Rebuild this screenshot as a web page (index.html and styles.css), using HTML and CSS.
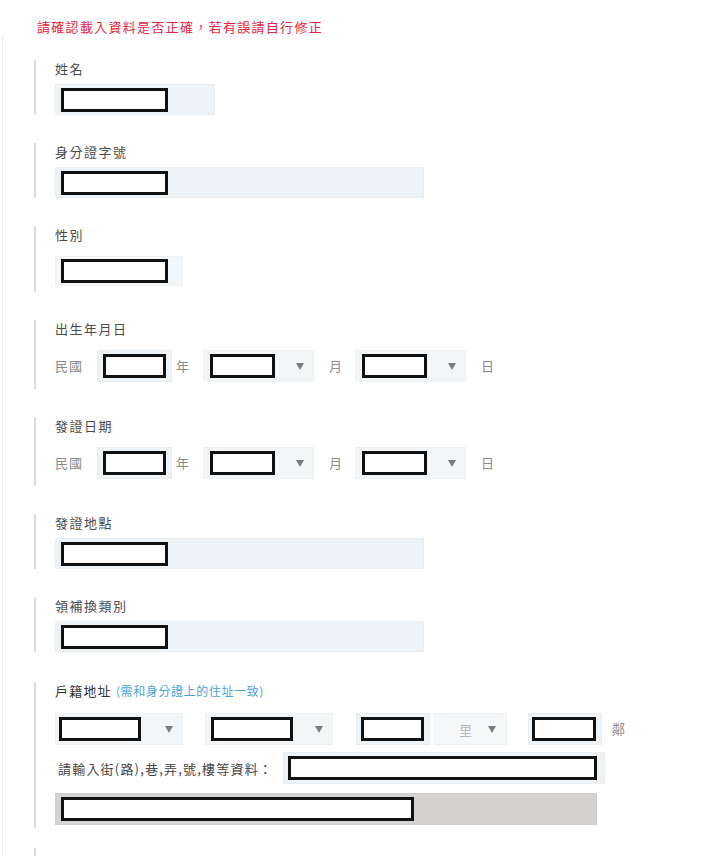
FILE: index.html
```html
<!DOCTYPE html>
<html lang="zh-Hant">
<head>
<meta charset="utf-8">
<title>資料確認</title>
<link rel="stylesheet" href="styles.css">
</head>
<body>
<div class="page">
  <p class="notice">請確認載入資料是否正確，若有誤請自行修正</p>
  <div class="panel">
    <section class="group">
      <div class="label">姓名</div>
      <div class="field w-name"><span class="redact r-107"></span></div>
    </section>

    <section class="group">
      <div class="label">身分證字號</div>
      <div class="field w-wide"><span class="redact r-107"></span></div>
    </section>

    <section class="group group-select">
      <div class="label">性別</div>
      <div class="field sel w-gender"><span class="redact r-107"></span></div>
    </section>

    <section class="group group-date">
      <div class="label">出生年月日</div>
      <div class="row">
        <span class="unit u-era">民國</span>
        <div class="field w-year"><span class="redact r-65"></span></div>
        <span class="unit u-year">年</span>
        <div class="field sel w-md"><span class="redact r-65"></span><span class="arrow"></span></div>
        <span class="unit u-month">月</span>
        <div class="field sel w-md"><span class="redact r-65"></span><span class="arrow"></span></div>
        <span class="unit u-day">日</span>
      </div>
    </section>

    <section class="group group-date">
      <div class="label">發證日期</div>
      <div class="row">
        <span class="unit u-era">民國</span>
        <div class="field w-year"><span class="redact r-65"></span></div>
        <span class="unit u-year">年</span>
        <div class="field sel w-md"><span class="redact r-65"></span><span class="arrow"></span></div>
        <span class="unit u-month">月</span>
        <div class="field sel w-md"><span class="redact r-65"></span><span class="arrow"></span></div>
        <span class="unit u-day">日</span>
      </div>
    </section>

    <section class="group">
      <div class="label">發證地點</div>
      <div class="field w-wide"><span class="redact r-107"></span></div>
    </section>

    <section class="group group-last-field">
      <div class="label">領補換類別</div>
      <div class="field w-wide"><span class="redact r-107"></span></div>
    </section>

    <section class="group group-address">
      <div class="label label-strong">戶籍地址 <span class="hint">(需和身分證上的住址一致)</span></div>
      <div class="row">
        <div class="field sel w-city"><span class="redact r-82"></span><span class="arrow"></span></div>
        <div class="field sel w-city gap-sel"><span class="redact r-82"></span><span class="arrow"></span></div>
        <div class="field w-village gap-vil"><span class="redact r-65"></span></div>
        <div class="field sel w-li"><span class="li">里</span><span class="arrow"></span></div>
        <div class="field w-village gap-nb"><span class="redact r-65"></span></div>
        <span class="unit u-nb">鄰</span>
      </div>
      <div class="row street">
        <span class="street-label">請輸入街(路),巷,弄,號,樓等資料：</span>
        <div class="field w-street"><span class="redact r-308"></span></div>
      </div>
      <div class="field result"><span class="redact r-353"></span></div>
    </section>

    <section class="group group-empty"></section>
  </div>
</div>
</body>
</html>
```

FILE: styles.css
```css
* {
  box-sizing: border-box;
}

html, body {
  margin: 0;
  padding: 0;
  background: #fff;
}

body {
  font-family: "Noto Sans CJK TC", "Noto Sans", "Liberation Sans", sans-serif;
  color: #4d4d4d;
}

.page {
  width: 719px;
}

.notice {
  margin: 0;
  padding: 18px 0 0 37px;
  height: 36px;
  font-size: 13px;
  line-height: 18px;
  letter-spacing: 1.3px;
  color: #e8253f;
}

.panel {
  margin-left: 2px;
  border-left: 1px solid #ededed;
  padding: 24px 0 0 31px;
}

.group {
  border-left: 2px solid #dedede;
  padding-left: 19px;
  margin-bottom: 28px;
}

.label {
  font-size: 13px;
  line-height: 18px;
  letter-spacing: 1.5px;
  margin-bottom: 6px;
  color: #4a4a4a;
  white-space: nowrap;
}

.label-strong {
  color: #333;
  letter-spacing: 1.2px;
  margin-bottom: 13px;
}

.hint {
  font-size: 12px;
  letter-spacing: 0.6px;
  color: #4ba3d6;
}

.field {
  display: flex;
  align-items: center;
  height: 31px;
  padding: 0 5px;
  background: #eef3f7;
  border: 1px solid #e7ecf0;
  flex: none;
}

.sel {
  background: #f3f6f9;
  border-color: #edf1f4;
  justify-content: space-between;
  padding-right: 9px;
}

.redact {
  display: block;
  height: 24px;
  background: #fff;
  border: 3px solid #111;
}

.r-65 { width: 65px; }
.r-82 { width: 82px; }
.r-107 { width: 107px; }
.r-308 { width: 309px; }
.r-353 { width: 353px; }

.arrow {
  width: 0;
  height: 0;
  border-left: 4px solid transparent;
  border-right: 4px solid transparent;
  border-top: 7px solid #7c7c7c;
}

.w-name { width: 160px; }
.w-wide { width: 369px; }
.w-gender { width: 128px; height: 30px; }

.group-select .label { margin-bottom: 12px; }
.group-select { padding-bottom: 6px; }

.group-date .label { margin-bottom: 12px; }
.group-date { padding-bottom: 7px; }

.group-last-field { margin-bottom: 30px; }

.row {
  display: flex;
  align-items: center;
  height: 32px;
}

.row .field { height: 32px; }

.unit {
  font-size: 13px;
  line-height: 18px;
  letter-spacing: 1px;
  color: #8a8a8a;
  white-space: nowrap;
}

.u-era { width: 42px; }
.u-year { margin: 0 13px 0 4px; }
.u-month { margin: 0 12px 0 15px; }
.u-day { margin-left: 15px; }

.w-year { width: 75px; }
.w-md { width: 111px; padding-left: 6px; }

.w-city { width: 128px; padding-left: 3px; }
.gap-sel { margin-left: 22px; padding-left: 5px; }
.w-village { width: 74px; padding-left: 4px; }
.gap-vil { margin-left: 23px; margin-right: 4px; }
.w-li { width: 73px; padding-left: 24px; padding-right: 10px; background: #f5f7f9; }
.li {
  font-size: 13px;
  color: #b8b8b8;
}
.gap-nb { margin-left: 21px; padding-left: 3px; }
.u-nb { margin-left: 10px; color: #8a8a8a; }

.street {
  margin-top: 7px;
}

.street-label {
  font-size: 13px;
  letter-spacing: 1.2px;
  color: #444;
  padding-left: 3px;
  width: 228px;
  white-space: nowrap;
}

.w-street {
  width: 322px;
  padding-left: 4px;
}

.result {
  margin-top: 9px;
  width: 542px;
  height: 32px;
  background: #d4d1d1;
  border-color: #d0cdcd;
}

.group-address {
  padding-bottom: 3px;
  margin-bottom: 20px;
}

.group-empty {
  height: 8px;
  margin-bottom: 0;
}
```
